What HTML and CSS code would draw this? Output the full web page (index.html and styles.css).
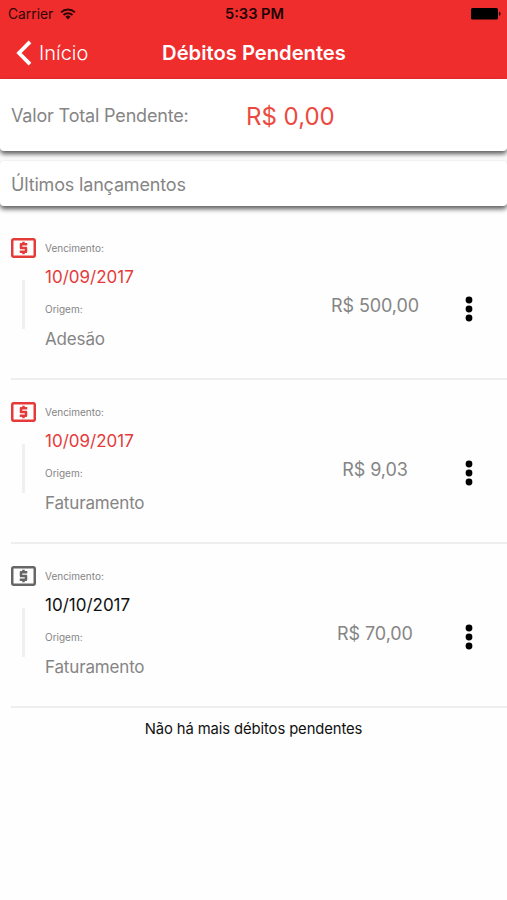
FILE: index.html
```html
<!DOCTYPE html>
<html lang="pt-BR">
<head>
    <meta charset="UTF-8">
    <meta name="viewport" content="width=device-width, initial-scale=1.0">
    <title>Débitos Pendentes</title>
    <link rel="stylesheet" href="styles.css">
</head>
<body>
    <svg width="0" height="0" class="sprite">
        <symbol id="money" viewBox="2 4 20 16">
            <path fill="currentColor" d="M20 4H4c-1.11 0-1.99.89-1.99 2L2 18c0 1.11.89 2 2 2h16c1.11 0 2-.89 2-2V6c0-1.11-.89-2-2-2zm0 14H4V6h16v12z"/>
            <path fill="currentColor" d="M11 17h2v-1h1c.55 0 1-.45 1-1v-3c0-.55-.45-1-1-1h-3v-1h4V8h-2V7h-2v1h-1c-.55 0-1 .45-1 1v3c0 .55.45 1 1 1h3v1H9v2h2v1z"/>
        </symbol>
        <symbol id="dots" viewBox="0 0 8 26">
            <circle cx="4" cy="4" r="3.4"/>
            <circle cx="4" cy="13" r="3.4"/>
            <circle cx="4" cy="22" r="3.4"/>
        </symbol>
    </svg>

    <header class="header">
        <div class="status-bar">
            <div class="carrier">
                <span>Carrier</span>
                <svg class="wifi" viewBox="0 0 16 12">
                    <path d="M1 4.3a10.2 10.2 0 0 1 14 0M3.5 7a6.6 6.6 0 0 1 9 0" fill="none" stroke="#300505" stroke-width="1.8"/>
                    <path d="M5.4 8.8a3.8 3.8 0 0 1 5.2 0L8 11.6z" fill="#300505"/>
                </svg>
            </div>
            <span class="time">5:33 PM</span>
            <svg class="battery" viewBox="0 0 30 12">
                <rect x="0" y="0" width="27" height="11.5" rx="1.6"/>
                <path d="M28 3.8c2 .6 2 3.4 0 4z"/>
            </svg>
        </div>
        <nav class="nav-bar">
            <a class="back">
                <svg class="chevron" viewBox="0 0 16 26">
                    <path d="M14 1.8L3 13l11 11.2" fill="none" stroke="#fff" stroke-width="3.8"/>
                </svg>
                <span>Início</span>
            </a>
            <h1 class="title">Débitos Pendentes</h1>
        </nav>
    </header>

    <section class="card total">
        <span class="total-label">Valor Total Pendente:</span>
        <span class="total-value">R$ 0,00</span>
    </section>
    <section class="card latest">Últimos lançamentos</section>

    <ul class="list">
        <li class="item overdue">
            <div class="marker">
                <svg class="money"><use href="#money"/></svg>
                <div class="line"></div>
            </div>
            <div class="info">
                <span class="label">Vencimento:</span>
                <span class="date">10/09/2017</span>
                <span class="label">Origem:</span>
                <span class="origin">Adesão</span>
            </div>
            <span class="value">R$ 500,00</span>
            <svg class="dots"><use href="#dots"/></svg>
        </li>
        <li class="item overdue">
            <div class="marker">
                <svg class="money"><use href="#money"/></svg>
                <div class="line"></div>
            </div>
            <div class="info">
                <span class="label">Vencimento:</span>
                <span class="date">10/09/2017</span>
                <span class="label">Origem:</span>
                <span class="origin">Faturamento</span>
            </div>
            <span class="value">R$ 9,03</span>
            <svg class="dots"><use href="#dots"/></svg>
        </li>
        <li class="item">
            <div class="marker">
                <svg class="money"><use href="#money"/></svg>
                <div class="line"></div>
            </div>
            <div class="info">
                <span class="label">Vencimento:</span>
                <span class="date">10/10/2017</span>
                <span class="label">Origem:</span>
                <span class="origin">Faturamento</span>
            </div>
            <span class="value">R$ 70,00</span>
            <svg class="dots"><use href="#dots"/></svg>
        </li>
    </ul>
    <p class="end">Não há mais débitos pendentes</p>
</body>
</html>
```

FILE: styles.css
```css
* {
    box-sizing: border-box;
}
body {
    margin: 0;
    background-color: #fefefe;
    color: #858585;
    font-family: Inter, 'Liberation Sans', sans-serif;
    font-size: 18px;
}
.sprite {
    display: block;
}
.header {
    height: 79px;
    background-color: #f02d2d;
}
.status-bar {
    display: grid;
    grid-template-columns: 1fr auto 1fr;
    align-items: center;
    height: 27px;
    padding: 0 6px 0 8px;
    color: #300505;
    font-size: 13.8px;
}
.carrier {
    display: flex;
    align-items: center;
    gap: 7px;
}
.wifi {
    width: 16px;
    height: 12px;
}
.time {
    color: #1c0303;
    font-size: 14.6px;
    font-weight: 600;
}
.battery {
    width: 30px;
    height: 12px;
    justify-self: end;
}
.nav-bar {
    display: grid;
    grid-template-columns: 1fr auto 1fr;
    align-items: center;
    height: 51px;
    padding: 0 15px 0 16px;
    color: #fff;
}
.back {
    display: flex;
    align-items: center;
    gap: 7px;
    font-size: 20px;
    font-weight: 300;
}
.chevron {
    width: 16px;
    height: 26px;
}
.title {
    margin: 0;
    font-size: 20.2px;
    font-weight: 600;
}
.card {
    display: flex;
    align-items: center;
    padding: 1px 11px 0;
    background-color: #fff;
    border-radius: 4px;
    box-shadow: 0 3px 5px rgba(0, 0, 0, 0.65);
    letter-spacing: -0.17px;
}
.total {
    height: 72px;
    margin-bottom: 10px;
    border-radius: 0 0 4px 4px;
}
.total-label {
    width: 235px;
}
.total-value {
    padding-top: 1px;
    color: #ec4a40;
    font-size: 24px;
    letter-spacing: 0;
}
.latest {
    height: 45px;
}
.list {
    margin: 10px 0 0;
    padding: 0 0 0 11px;
    list-style: none;
}
.item {
    display: flex;
    height: 163.9px;
    border-bottom: 2px solid #eee;
}
.marker {
    width: 34px;
    padding-top: 22px;
    color: #666;
}
.money {
    display: block;
    width: 25px;
    height: 20px;
}
.line {
    width: 3px;
    height: 49px;
    margin: 22px 0 0 11px;
    background-color: #f0f0f0;
}
.info {
    display: flex;
    flex-direction: column;
    width: 240px;
    padding-top: 22px;
}
.label {
    font-size: 10px;
    line-height: 20px;
}
.date {
    color: #111;
    font-size: 17px;
    line-height: 38px;
    margin-bottom: 3px;
}
.origin {
    font-size: 17px;
    line-height: 41px;
    letter-spacing: -0.16px;
}
.overdue .marker,
.overdue .date {
    color: #e53a3a;
}
.value {
    width: 180px;
    padding-top: 79px;
    line-height: 22px;
    letter-spacing: -0.08px;
    text-align: center;
}
.dots {
    width: 8px;
    height: 26px;
    margin-top: 80px;
    fill: #000;
}
.end {
    margin: 11px 0 0;
    color: #111;
    font-size: 14.8px;
    line-height: 20px;
    letter-spacing: -0.1px;
    text-align: center;
}
```
